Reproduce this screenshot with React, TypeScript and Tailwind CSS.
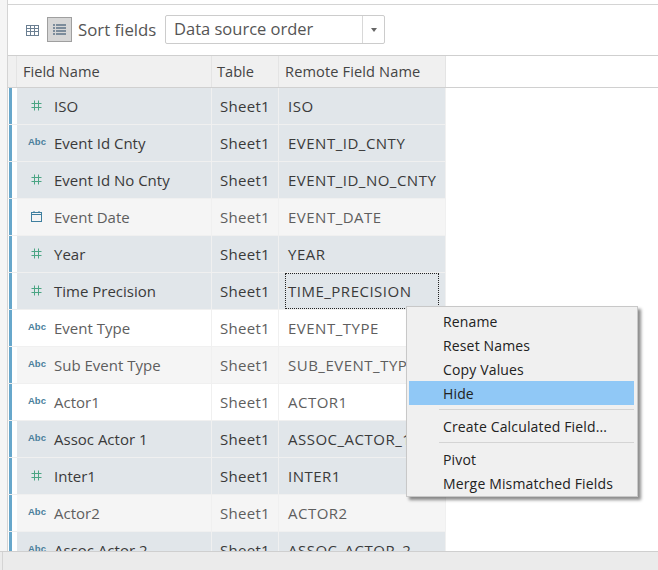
const F = "font-['Open_Sans',sans-serif]";

type Kind = "num" | "abc" | "date";
type Tone = "dark" | "light" | "white";
const rows: [Kind, string, string, Tone][] = [
  ["num", "ISO", "ISO", "dark"],
  ["abc", "Event Id Cnty", "EVENT_ID_CNTY", "dark"],
  ["num", "Event Id No Cnty", "EVENT_ID_NO_CNTY", "dark"],
  ["date", "Event Date", "EVENT_DATE", "light"],
  ["num", "Year", "YEAR", "dark"],
  ["num", "Time Precision", "TIME_PRECISION", "dark"],
  ["abc", "Event Type", "EVENT_TYPE", "white"],
  ["abc", "Sub Event Type", "SUB_EVENT_TYPE", "light"],
  ["abc", "Actor1", "ACTOR1", "white"],
  ["abc", "Assoc Actor 1", "ASSOC_ACTOR_1", "dark"],
  ["num", "Inter1", "INTER1", "dark"],
  ["abc", "Actor2", "ACTOR2", "light"],
  ["abc", "Assoc Actor 2", "ASSOC_ACTOR_2", "dark"],
];

function TypeIcon({ kind }: { kind: Kind }) {
  if (kind === "num")
    return (
      <svg width="11" height="11" viewBox="0 0 11 11" className="ml-[14px] mr-[12px] shrink-0 -translate-y-[1px]" stroke="#4ba584" strokeWidth="1" fill="none">
        <path d="M3.5 0.5V10.5M7.5 0.5V10.5M0.5 3.5H10.5M0.5 7.5H10.5" />
      </svg>
    );
  if (kind === "date")
    return (
      <svg width="11" height="11" viewBox="0 0 11 11" className="ml-[14px] mr-[12px] shrink-0 -translate-y-[1px]" stroke="#3f7f9f" strokeWidth="1" fill="none">
        <rect x="0.5" y="1.5" width="10" height="9" />
        <path d="M0.5 3.5H10.5M3 0V2M8 0V2" />
      </svg>
    );
  return <span className="ml-[11px] mr-[7px] w-[19px] shrink-0 -translate-y-[1px] font-['Liberation_Sans',sans-serif] text-[9.5px] font-bold text-[#4b7f9c]">Abc</span>;
}

function MenuItem({ label, active }: { label: string; active?: boolean }) {
  return (
    <div className={`ml-[2px] mr-[3px] flex h-6 items-center pl-[34px] text-[14px] tracking-[0.15px] text-[#222] ${active ? "bg-[#90c8f6]" : ""}`}>{label}</div>
  );
}

export default function App() {
  return (
    <div className={`${F} relative flex h-[570px] w-[658px] flex-col overflow-hidden bg-white`}>
      <div className="flex min-h-0 flex-1">
        <div className="w-[8px] shrink-0 border-r border-[#d4d4d4] bg-[#f5f5f5]" />
        <div className="flex min-w-0 flex-1 flex-col">
          <div className="h-[5px] shrink-0 border-b border-[#d4d4d4] bg-white" />
          <div className="flex h-[51px] shrink-0 items-center border-b border-[#cfcfcf] pl-[18px]">
            <svg width="13" height="11" viewBox="0 0 13 11" className="mr-[8px]" fill="none" stroke="#6b7f92" strokeWidth="1">
              <rect x="0.5" y="0.5" width="12" height="10" />
              <path d="M0.5 3.5H12.5M0.5 6.5H12.5M4.5 0.5V10.5M8.5 0.5V10.5" />
            </svg>
            <div className="mb-[1px] flex h-[25px] w-[25px] items-center justify-center border border-[#9f9f9f] bg-[#d6d6d6]">
              <svg width="13" height="11" viewBox="0 0 13 11" fill="none" stroke="#5f7488" strokeWidth="1.4">
                <path d="M0 1H2M3 1H13M0 4H2M3 4H13M0 7H2M3 7H13M0 10H2M3 10H13" />
              </svg>
            </div>
            <span className="ml-[6px] w-[80px] whitespace-nowrap text-[16.8px] text-[#555]">Sort fields</span>
            <div className="mb-[1px] ml-[7px] flex h-[29px] w-[220px] items-center rounded-[2px] border border-[#cccccc] bg-white">
              <span className="flex-1 pl-[8px] text-[16.5px] text-[#555]">Data source order</span>
              <div className="flex h-full w-[22px] items-center justify-center border-l border-[#d8d8d8]">
                <div className="h-0 w-0 border-x-[3.5px] border-t-[4px] border-x-transparent border-t-[#666]" />
              </div>
            </div>
          </div>
          <div className="flex h-[32px] shrink-0 border-b border-[#d0d0d0] text-[14.6px] text-[#444]">
            <div className="w-[9px] shrink-0 border-r border-[#e4e4e4] bg-[#f0f0f0]" />
            <div className="flex w-[195px] shrink-0 items-center border-r border-[#e4e4e4] bg-[#f0f0f0] pl-[6px]">Field Name</div>
            <div className="flex w-[67px] shrink-0 items-center border-r border-[#e4e4e4] bg-[#f0f0f0] pl-[5px]">Table</div>
            <div className="flex w-[167px] shrink-0 items-center border-r border-[#e4e4e4] bg-[#f0f0f0] pl-[6px] tracking-[0.12px]">Remote Field Name</div>
          </div>
          <div className="min-h-0 flex-1 overflow-hidden">
            {rows.map(([kind, name, remote, tone]) => {
              const bg = tone === "dark" ? "bg-[#e1e6ea]" : tone === "light" ? "bg-[#f5f5f5]" : "bg-white";
              const color = tone === "dark" ? "text-[#3a3a3a]" : "text-[#5e5e5e]";
              const focus = name === "Time Precision";
              return (
                <div key={name} className={`flex h-[37px] shrink-0 text-[15px] ${color}`}>
                  <div className="flex w-[9px] shrink-0 border-b border-[#eeeeee] bg-white pl-[1px]">
                    <div className="w-[3px] bg-[#67a7cb]" />
                  </div>
                  <div className={`flex w-[195px] shrink-0 items-center border-b border-r border-[#f0f0f0] ${bg}`}>
                    <TypeIcon kind={kind} />
                    <span className="whitespace-nowrap">{name}</span>
                  </div>
                  <div className={`flex w-[67px] shrink-0 items-center border-b border-r border-[#f0f0f0] pl-[8px] tracking-[0.3px] ${bg}`}>Sheet1</div>
                  <div className={`flex w-[167px] shrink-0 items-center border-b border-r border-[#f0f0f0] pl-[6px] ${bg}`}>
                    <div className={`flex h-[36px] w-[154px] items-center overflow-hidden whitespace-nowrap tracking-[0.5px] ${focus ? "border border-dotted border-[#222] pl-[2px]" : "pl-[3px]"}`}>
                      {remote}
                    </div>
                  </div>
                </div>
              );
            })}
          </div>
        </div>
      </div>
      <div className="flex h-[19px] shrink-0 border-t border-[#cfcfcf] bg-[#ebebeb]">
        <div className="w-[3px] border-r border-[#d4d4d4]" />
      </div>
      <div className="absolute left-[406px] top-[306px] h-[191px] w-[232px] border border-[#c8c8c8] bg-[#f0f0f0] pt-[2px] shadow-[3px_3px_3px_rgba(0,0,0,0.45)]">
        <MenuItem label="Rename" />
        <MenuItem label="Reset Names" />
        <MenuItem label="Copy Values" />
        <MenuItem label="Hide" active />
        <div className="ml-[32px] mr-[3px] my-[4px] h-[1px] bg-[#d4d4d4]" />
        <MenuItem label="Create Calculated Field..." />
        <div className="ml-[32px] mr-[3px] my-[4px] h-[1px] bg-[#d4d4d4]" />
        <MenuItem label="Pivot" />
        <MenuItem label="Merge Mismatched Fields" />
      </div>
    </div>
  );
}
